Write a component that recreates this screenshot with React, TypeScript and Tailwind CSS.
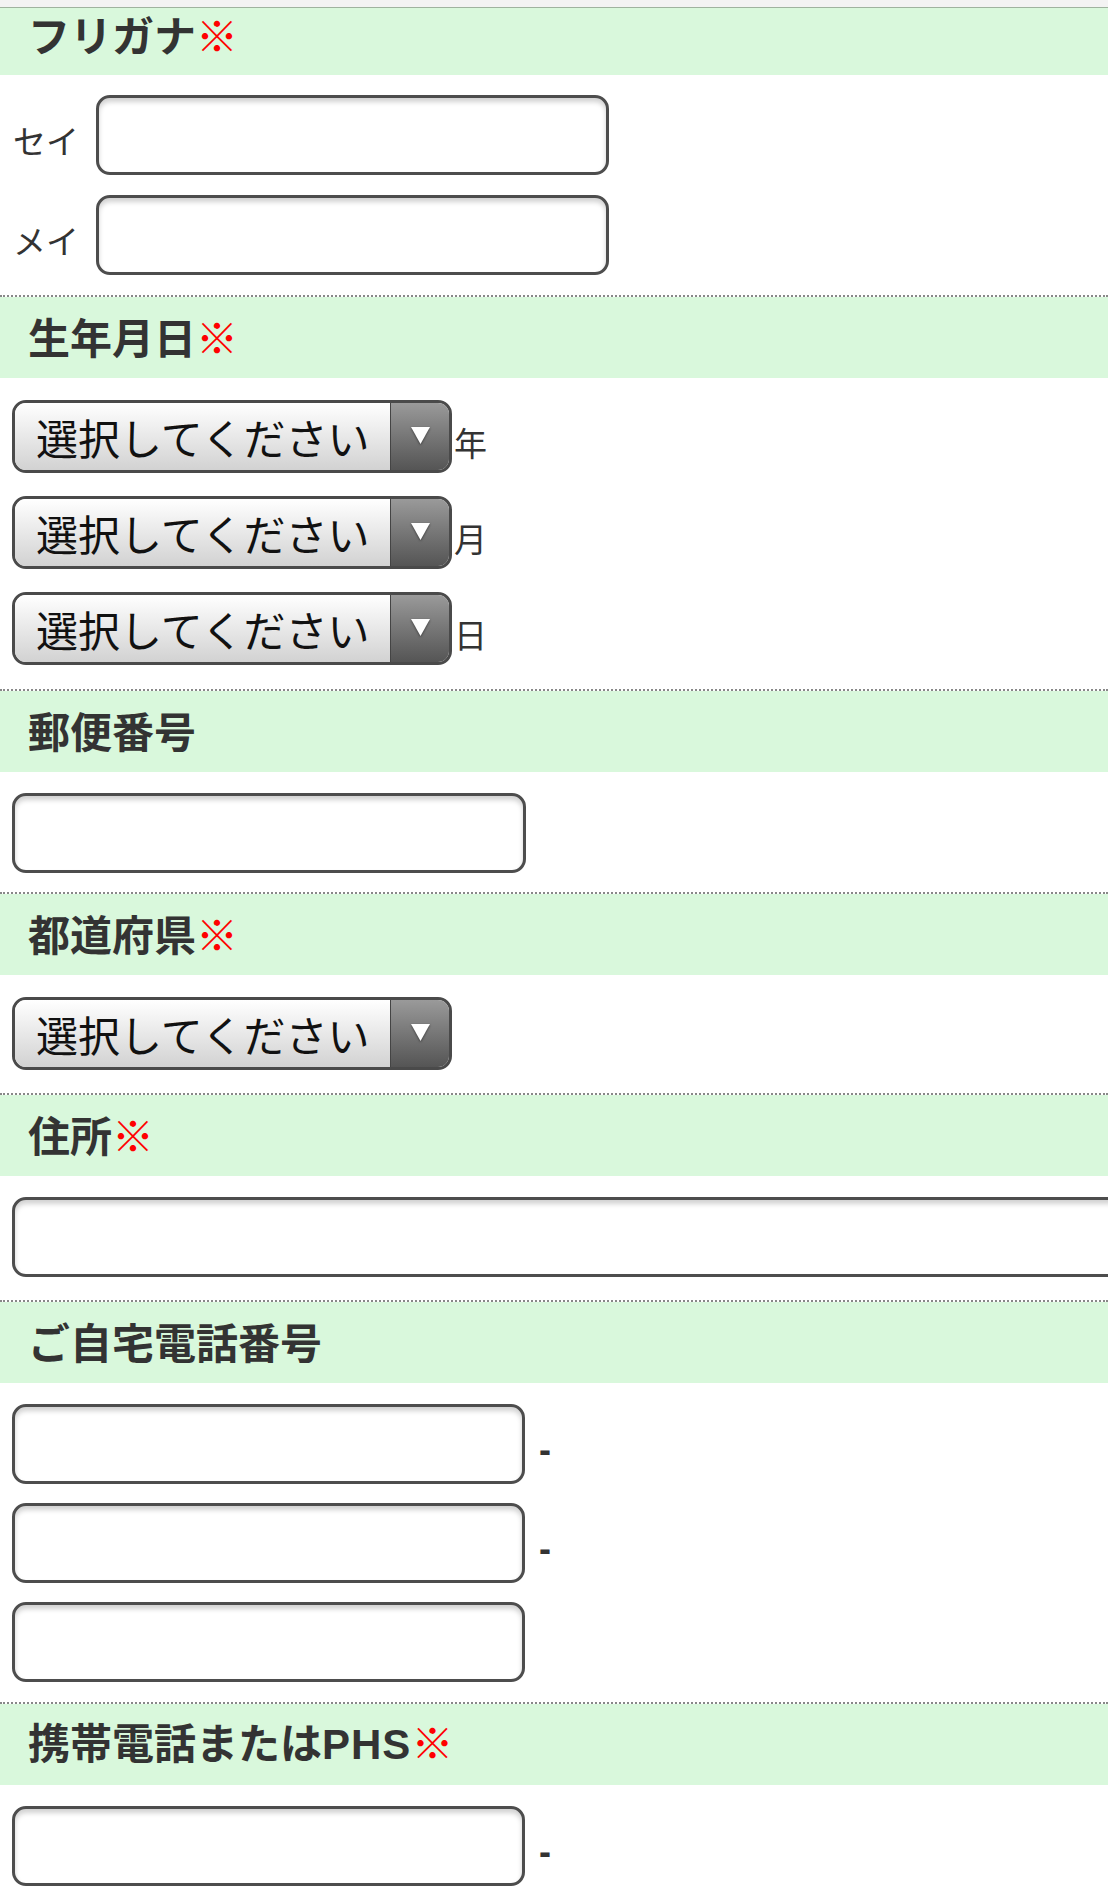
import type { ReactNode } from 'react';

const jp = { fontFamily: '"Noto Sans CJK JP", "Noto Sans", sans-serif' };
const latin = { fontFamily: '"Liberation Sans", "Noto Sans CJK JP", sans-serif' };

type THeading = {
  title: ReactNode;
  required?: boolean;
  first?: boolean;
}

function Heading({ title, required, first }: THeading) {
  return (
    <div
      className={
        first
          ? 'flex h-[67px] items-center bg-[#d9f8dc] pb-[15px] pl-[28px]'
          : 'flex h-[81px] items-center bg-[#d9f8dc] pb-[3px] pl-[28px]'
      }
    >
      <h3 className="text-[42px] font-bold leading-none text-[#333333]">
        {title}
        {required && <span className="font-normal text-[#ff0000]">※</span>}
      </h3>
    </div>
  );
}

function TextBox({ width }: { width: string }) {
  return (
    <input
      type="text"
      className={`${width} h-[80px] shrink-0 rounded-[14px] border-[3px] border-[#4d4d4d] bg-white px-3 text-[32px] shadow-[inset_0_4px_5px_rgba(0,0,0,0.18)] outline-none`}
    />
  );
}

function SelectBox() {
  return (
    <div className="flex h-[73px] w-[440px] shrink-0 overflow-hidden rounded-[14px] border-[3px] border-[#4a4a4a]">
      <div className="flex flex-1 items-center bg-gradient-to-b from-[#ffffff] to-[#d2d2d2] pl-[21px] text-[42px] leading-none text-[#111111]">
        選択してください
      </div>
      <div className="flex w-[59px] items-center justify-center border-l border-[#444444] bg-gradient-to-b from-[#9a9a9a] to-[#555555]">
        <svg width="21" height="19" viewBox="0 0 21 19" className="mb-[2px] drop-shadow-[0_1px_1px_rgba(0,0,0,0.5)]">
          <path d="M1 1 H20 L10.5 18 Z" fill="#ffffff" />
        </svg>
      </div>
    </div>
  );
}

function Section({ children, className }: { children: ReactNode; className: string }) {
  return <div className={`flex flex-col px-[12px] ${className}`}>{children}</div>;
}

function Dash() {
  return (
    <span className="mt-[12px] ml-[14px] text-[36px] font-bold leading-none text-[#333333]" style={latin}>
      -
    </span>
  );
}

const divider = 'border-t-2 border-dotted border-[#888888]';

export default function App() {
  return (
    <div className="h-[1888px] w-[1108px] overflow-hidden bg-white" style={jp}>
      <div className="h-[8px] border-b border-[#9fb39f] bg-[#f3f3f3]" />

      <Heading title="フリガナ" required first />
      <Section className="gap-[20px] pt-[20px] pb-[20px]">
        {['セイ', 'メイ'].map((label) => (
          <div key={label} className="flex items-center">
            <span className="mt-[10px] w-[84px] pl-[1px] text-[33px] leading-none text-[#333333]">{label}</span>
            <TextBox width="w-[513px]" />
          </div>
        ))}
      </Section>

      <div className={divider}>
        <Heading title="生年月日" required />
        <Section className="gap-[23px] pt-[22px] pb-[24px]">
          {['年', '月', '日'].map((unit) => (
            <div key={unit} className="flex items-center">
              <SelectBox />
              <span className="mt-[12px] ml-[2px] text-[33px] leading-none text-[#333333]">{unit}</span>
            </div>
          ))}
        </Section>
      </div>

      <div className={divider}>
        <Heading title="郵便番号" />
        <Section className="pt-[21px] pb-[19px]">
          <TextBox width="w-[514px]" />
        </Section>
      </div>

      <div className={divider}>
        <Heading title="都道府県" required />
        <Section className="pt-[22px] pb-[23px]">
          <SelectBox />
        </Section>
      </div>

      <div className={divider}>
        <Heading title="住所" required />
        <Section className="pt-[21px] pb-[23px]">
          <TextBox width="w-[1120px]" />
        </Section>
      </div>

      <div className={divider}>
        <Heading title="ご自宅電話番号" />
        <Section className="gap-[19px] pt-[21px] pb-[20px]">
          {[true, true, false].map((dash, i) => (
            <div key={i} className="flex items-center">
              <TextBox width="w-[513px]" />
              {dash && <Dash />}
            </div>
          ))}
        </Section>
      </div>

      <div className={divider}>
        <Heading
          title={
            <>
              携帯電話または<span className="tracking-[1px]" style={latin}>PHS</span>
            </>
          }
          required
        />
        <Section className="pt-[21px]">
          <div className="flex items-center">
            <TextBox width="w-[513px]" />
            <Dash />
          </div>
        </Section>
      </div>
    </div>
  );
}
